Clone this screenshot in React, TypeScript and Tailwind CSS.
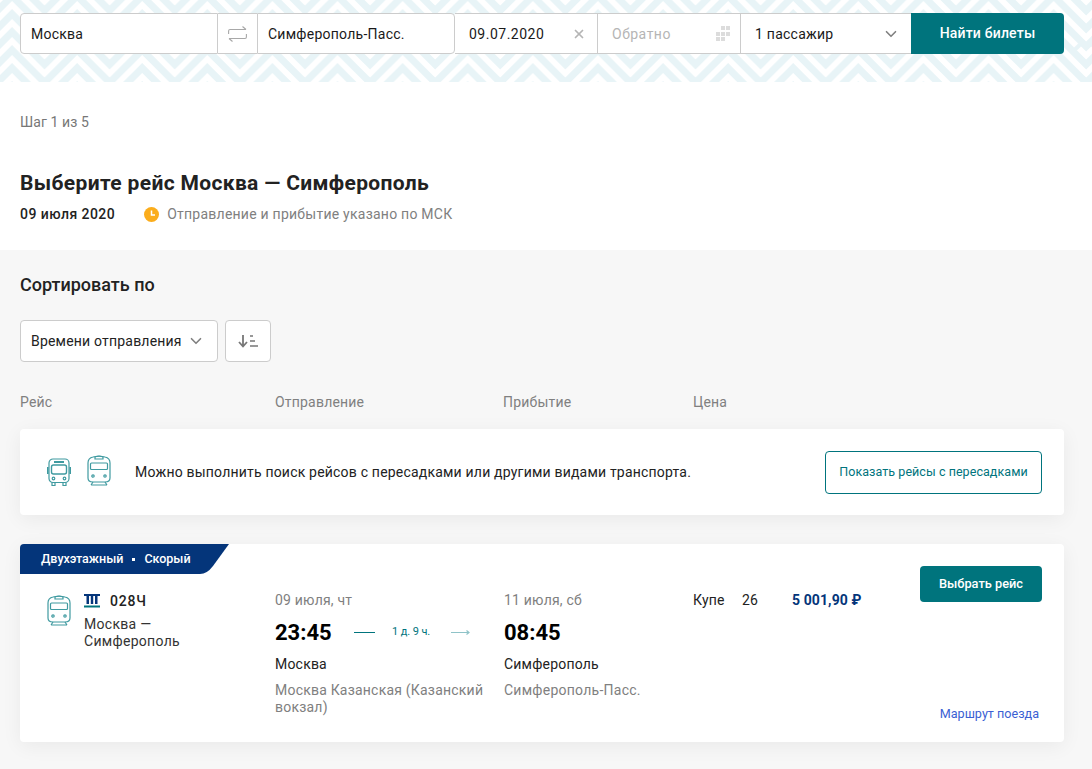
import type { JSX } from "react";
import { ChevronDown, X } from "lucide-react";

const ZIGZAGS = [-22, -4, 14, 32, 50, 68];

/* Chevron wallpaper behind the search form */
const HeaderPattern = (): JSX.Element => (
  <svg className="absolute inset-0 h-full w-full" aria-hidden="true">
    <defs>
      <pattern id="chevrons" width="65.1" height="72" patternUnits="userSpaceOnUse">
        <g fill="none" stroke="#e8f4f7" strokeWidth="7">
          {ZIGZAGS.map((y) => (
            <path key={y} d={`M-20.55 ${y + 32.55} L12 ${y} L44.55 ${y + 32.55} L77.1 ${y} L109.65 ${y + 32.55}`} />
          ))}
          <path d="M33 50 L39 44 M50 44 L56 50" strokeWidth="4" />
        </g>
      </pattern>
    </defs>
    <rect width="100%" height="100%" fill="url(#chevrons)" />
  </svg>
);

const SwapIcon = (): JSX.Element => (
  <svg width="19" height="16" viewBox="0 0 19 16" fill="none" stroke="#a8a8a8" strokeWidth="1.1">
    <path d="M0.6 8 V5 Q0.6 3.5 2 3.5 H18 M14.5 0.5 L18 3.5" />
    <path d="M18.4 8 V11 Q18.4 12.5 17 12.5 H1 M4.5 15.5 L1 12.5" />
  </svg>
);

const CalendarDots = (): JSX.Element => (
  <svg width="16" height="16" viewBox="0 0 16 16" fill="#dcdcdc">
    <rect x="6" y="0" width="4" height="4" />
    <rect x="11" y="0" width="4" height="4" />
    <rect x="1" y="6" width="4" height="4" />
    <rect x="6" y="6" width="4" height="4" />
    <rect x="11" y="6" width="4" height="4" />
    <rect x="1" y="11" width="4" height="4" />
    <rect x="6" y="11" width="4" height="4" />
  </svg>
);

const SortIcon = (): JSX.Element => (
  <svg width="20" height="14" viewBox="0 0 20 14" fill="none" stroke="#777" strokeWidth="1.8">
    <path d="M5 1 V12 M1 8 L5 12.5 L9 8" />
    <path d="M12 2 H15 M12 7 H17 M12 12 H20" strokeWidth="1.4" />
  </svg>
);

const BusIcon = (): JSX.Element => (
  <svg width="24" height="29" viewBox="0 0 24 29" fill="none" stroke="#3f9aa0" strokeWidth="1.2">
    <rect x="2" y="1" width="20" height="23.5" rx="4" />
    <rect x="4.5" y="7" width="15" height="9" rx="2" strokeWidth="1.4" />
    <path d="M7 4 H17" strokeWidth="2" />
    <path d="M0.8 9 V16 M23.2 9 V16" strokeWidth="1.6" />
    <circle cx="6.5" cy="20.5" r="1.3" />
    <circle cx="17.5" cy="20.5" r="1.3" />
    <path d="M5 24.5 V27.5 H8 V24.5 M16 24.5 V27.5 H19 V24.5" />
  </svg>
);

const TrainIcon = (): JSX.Element => (
  <svg width="24" height="31" viewBox="0 0 24 31" fill="none" stroke="#3f9aa0" strokeWidth="1.2">
    <path d="M1 8 Q1 3 6 2 Q12 0.5 18 2 Q23 3 23 8 V23 Q23 27 18 27 H6 Q1 27 1 23 Z" />
    <path d="M8 2 Q12 0 16 2 V4 H8 Z" />
    <rect x="3.5" y="8" width="17" height="6.5" rx="1" />
    <circle cx="6" cy="21" r="1.2" />
    <circle cx="18" cy="21" r="1.2" />
    <path d="M6 27 L4 30 M18 27 L20 30 M4 30 H20" />
  </svg>
);

const WagonIcon = (): JSX.Element => (
  <svg width="16" height="14" viewBox="0 0 16 14">
    <path d="M0 0 H16 V2 H0 Z M2.5 2 H5 V10 H2.5 Z M6.8 2 H9.2 V10 H6.8 Z M11 2 H13.5 V10 H11 Z" fill="#04357a" />
    <rect x="0" y="11.5" width="16" height="2" fill="#00747d" />
  </svg>
);

const ClockIcon = (): JSX.Element => (
  <svg width="15" height="15" viewBox="0 0 15 15">
    <circle cx="7.5" cy="7.5" r="7.5" fill="#fbad1c" />
    <path d="M7.5 3.5 V8 H11" fill="none" stroke="#fff" strokeWidth="1.5" />
  </svg>
);

/* Shaped corner of the train category label */
const LabelTail = (): JSX.Element => (
  <svg width="29" height="30" viewBox="0 0 29 30" className="shrink-0">
    <path d="M0 0 H29 L13 22 Q7 30 0 30 Z" fill="#04357a" />
  </svg>
);

const SearchForm = (): JSX.Element => (
  <div className="relative flex h-[41px] text-[14px] tracking-[0.25px] text-[#1a1a1a]">
    <div className="flex w-[198px] items-center rounded-l-[4px] border border-[#cccccc] bg-white pl-[10px] pt-px">Москва</div>
    <div className="flex w-[39px] items-center justify-center border-y border-[#cccccc] bg-white pr-px">
      <SwapIcon />
    </div>
    <div className="flex w-[198px] items-center rounded-r-[4px] border border-[#cccccc] bg-white pl-[10px] pt-px">Симферополь-Пасс.</div>
    <div className="flex w-[143px] items-center justify-between border-y border-r border-[#cccccc] bg-white pl-[14px] pr-[11px] pt-px tracking-[0.5px]">
      09.07.2020
      <X size={14} strokeWidth={3} className="text-[#b5b5b5]" />
    </div>
    <div className="flex w-[143px] items-center justify-between border-y border-r border-[#cccccc] bg-white pl-[14px] pr-[9px] pt-px tracking-[0.5px] text-[#b5b5b5]">
      Обратно
      <CalendarDots />
    </div>
    <div className="flex w-[170px] items-center justify-between border-y border-[#cccccc] bg-white pl-[14px] pr-[11px] pt-px">
      1 пассажир
      <ChevronDown size={18} strokeWidth={2.2} className="text-[#808080]" />
    </div>
    <button className="w-[153px] rounded-r-[4px] bg-[#00747d] text-[14px] font-medium tracking-[0.2px] text-white">Найти билеты</button>
  </div>
);

const TrainCard = (): JSX.Element => (
  <div className="mt-[29px] h-[198px] rounded-[4px] bg-white shadow-[0_4px_20px_rgba(0,0,0,0.06)]">
    <div className="flex h-[30px] w-[209px] overflow-hidden rounded-tl-[4px]">
      <div className="flex h-[30px] w-[180px] shrink-0 items-center gap-[9px] bg-[#04357a] pl-[21px] text-[12.5px] font-medium whitespace-nowrap text-white">
        <span>Двухэтажный</span>
        <span className="h-[3px] w-[3px] bg-white" />
        <span>Скорый</span>
      </div>
      <LabelTail />
    </div>

    <div className="relative grid h-[168px] grid-cols-[255px_229px_189px_1fr]">
      <div className="flex pl-[27px] pt-[21px]">
        <TrainIcon />
        <div className="ml-[13px] w-[110px] pt-[-1px]">
          <div className="mt-[-1px] flex h-[14px] items-center gap-[10px] text-[14px] font-medium tracking-[0.8px] text-[#222222]">
            <WagonIcon />
            028Ч
          </div>
          <div className="mt-[8px] text-[14px] leading-[17px] tracking-[0.3px] text-[#333333]">Москва — Симферополь</div>
        </div>
      </div>

      <div className="pt-[16px]">
        <div className="text-[14px] tracking-[0.2px] text-[#808080]">09 июля, чт</div>
        <div className="mt-[7px] flex h-[28px] items-center">
          <span className="w-[79px] text-[22px] font-bold text-black">23:45</span>
          <span className="h-px w-[21px] bg-[#00747d]" />
          <span className="ml-[17px] w-[59px] text-[11px] tracking-[-0.1px] text-[#00747d]">1 д. 9 ч.</span>
          <svg width="19" height="7" viewBox="0 0 19 7" fill="none" stroke="#8fc3c8" strokeWidth="1.2">
            <path d="M0 3.5 H18 M15.5 1.5 L18 3.5 L15.5 5.5" />
          </svg>
        </div>
        <div className="mt-[8px] text-[14px] tracking-[0.2px] text-[#222222]">Москва</div>
        <div className="mt-[7px] w-[215px] text-[14px] leading-[17px] tracking-[0.21px] text-[#808080]">
          Москва Казанская (Казанский вокзал)
        </div>
      </div>

      <div className="pt-[16px]">
        <div className="text-[14px] tracking-[0.2px] text-[#808080]">11 июля, сб</div>
        <div className="mt-[7px] flex h-[28px] items-center text-[22px] font-bold text-black">08:45</div>
        <div className="mt-[8px] text-[14px] tracking-[0.2px] text-[#222222]">Симферополь</div>
        <div className="mt-[7px] text-[14px] leading-[17px] tracking-[0.25px] text-[#808080]">Симферополь-Пасс.</div>
      </div>

      <div className="flex items-start justify-between pr-[22px]">
        <div className="flex pt-[16px] text-[14px] tracking-[0.2px] text-[#222222]">
          <span className="w-[49px]">Купе</span>
          <span className="w-[50px]">26</span>
          <span className="font-bold tracking-[0.1px] text-[#04357a]">5 001,90 ₽</span>
        </div>
        <button className="mt-[-8px] h-[36px] w-[122px] rounded-[4px] bg-[#00747d] text-[12.8px] font-medium text-white">
          Выбрать рейс
        </button>
      </div>

      <a className="absolute bottom-[20px] right-[25px] text-[12.6px] leading-[16px] text-[#3b5fd3]">Маршрут поезда</a>
    </div>
  </div>
);

export default function App(): JSX.Element {
  return (
    <div className="h-[769px] overflow-hidden bg-[#f7f7f7] font-['Roboto',sans-serif]">
      <header className="relative h-[82px] bg-white px-[20px] pr-[28px] pt-[13px]">
        <HeaderPattern />
        <SearchForm />
      </header>

      <section className="h-[168px] bg-white px-[20px] pt-[32px]">
        <div className="text-[14px] leading-[16px] tracking-[0.1px] text-[#777777]">Шаг 1 из 5</div>
        <h1 className="mt-[38px] text-[21px] font-bold leading-[30px] tracking-[0.35px] text-[#222222]">Выберите рейс Москва — Симферополь</h1>
        <div className="mt-[7px] flex items-center text-[14px] leading-[18px] tracking-[0.24px]">
          <span className="font-medium tracking-[0.45px] text-[#222222]">09 июля 2020</span>
          <span className="ml-[29px] mr-[8px]">
            <ClockIcon />
          </span>
          <span className="text-[#808080]">Отправление и прибытие указано по МСК</span>
        </div>
      </section>

      <main className="px-[20px] pr-[28px]">
        <h2 className="pt-[24px] text-[18px] font-medium leading-[22px] text-[#222222]">Сортировать по</h2>
        <div className="mt-[24px] flex gap-[7px]">
          <div className="flex h-[42px] w-[198px] items-center justify-between rounded-[4px] border border-[#cccccc] bg-white pl-[10px] pr-[12px] text-[14px] tracking-[0.2px] text-[#222222]">
            Времени отправления
            <ChevronDown size={18} strokeWidth={2.2} className="text-[#808080]" />
          </div>
          <button className="flex h-[42px] w-[46px] items-center justify-center rounded-[4px] border border-[#cccccc] bg-white">
            <SortIcon />
          </button>
        </div>

        <div className="mt-[31px] grid grid-cols-[255px_228px_190px_1fr] text-[14px] leading-[18px] tracking-[0.2px] text-[#808080]">
          <span>Рейс</span>
          <span>Отправление</span>
          <span>Прибытие</span>
          <span>Цена</span>
        </div>

        <div className="mt-[18px] flex h-[86px] items-center rounded-[4px] bg-white pl-[27px] pr-[22px] shadow-[0_4px_20px_rgba(0,0,0,0.06)]">
          <BusIcon />
          <span className="ml-[16px] mt-[-3px]">
            <TrainIcon />
          </span>
          <span className="ml-[24px] text-[14px] tracking-[0.2px] text-[#222222]">
            Можно выполнить поиск рейсов с пересадками или другими видами транспорта.
          </span>
          <button className="ml-auto h-[43px] w-[217px] rounded-[4px] border border-[#00747d] text-[12.5px] tracking-[0.06px] text-[#00747d]">
            Показать рейсы с пересадками
          </button>
        </div>

        <TrainCard />
      </main>
    </div>
  );
}
